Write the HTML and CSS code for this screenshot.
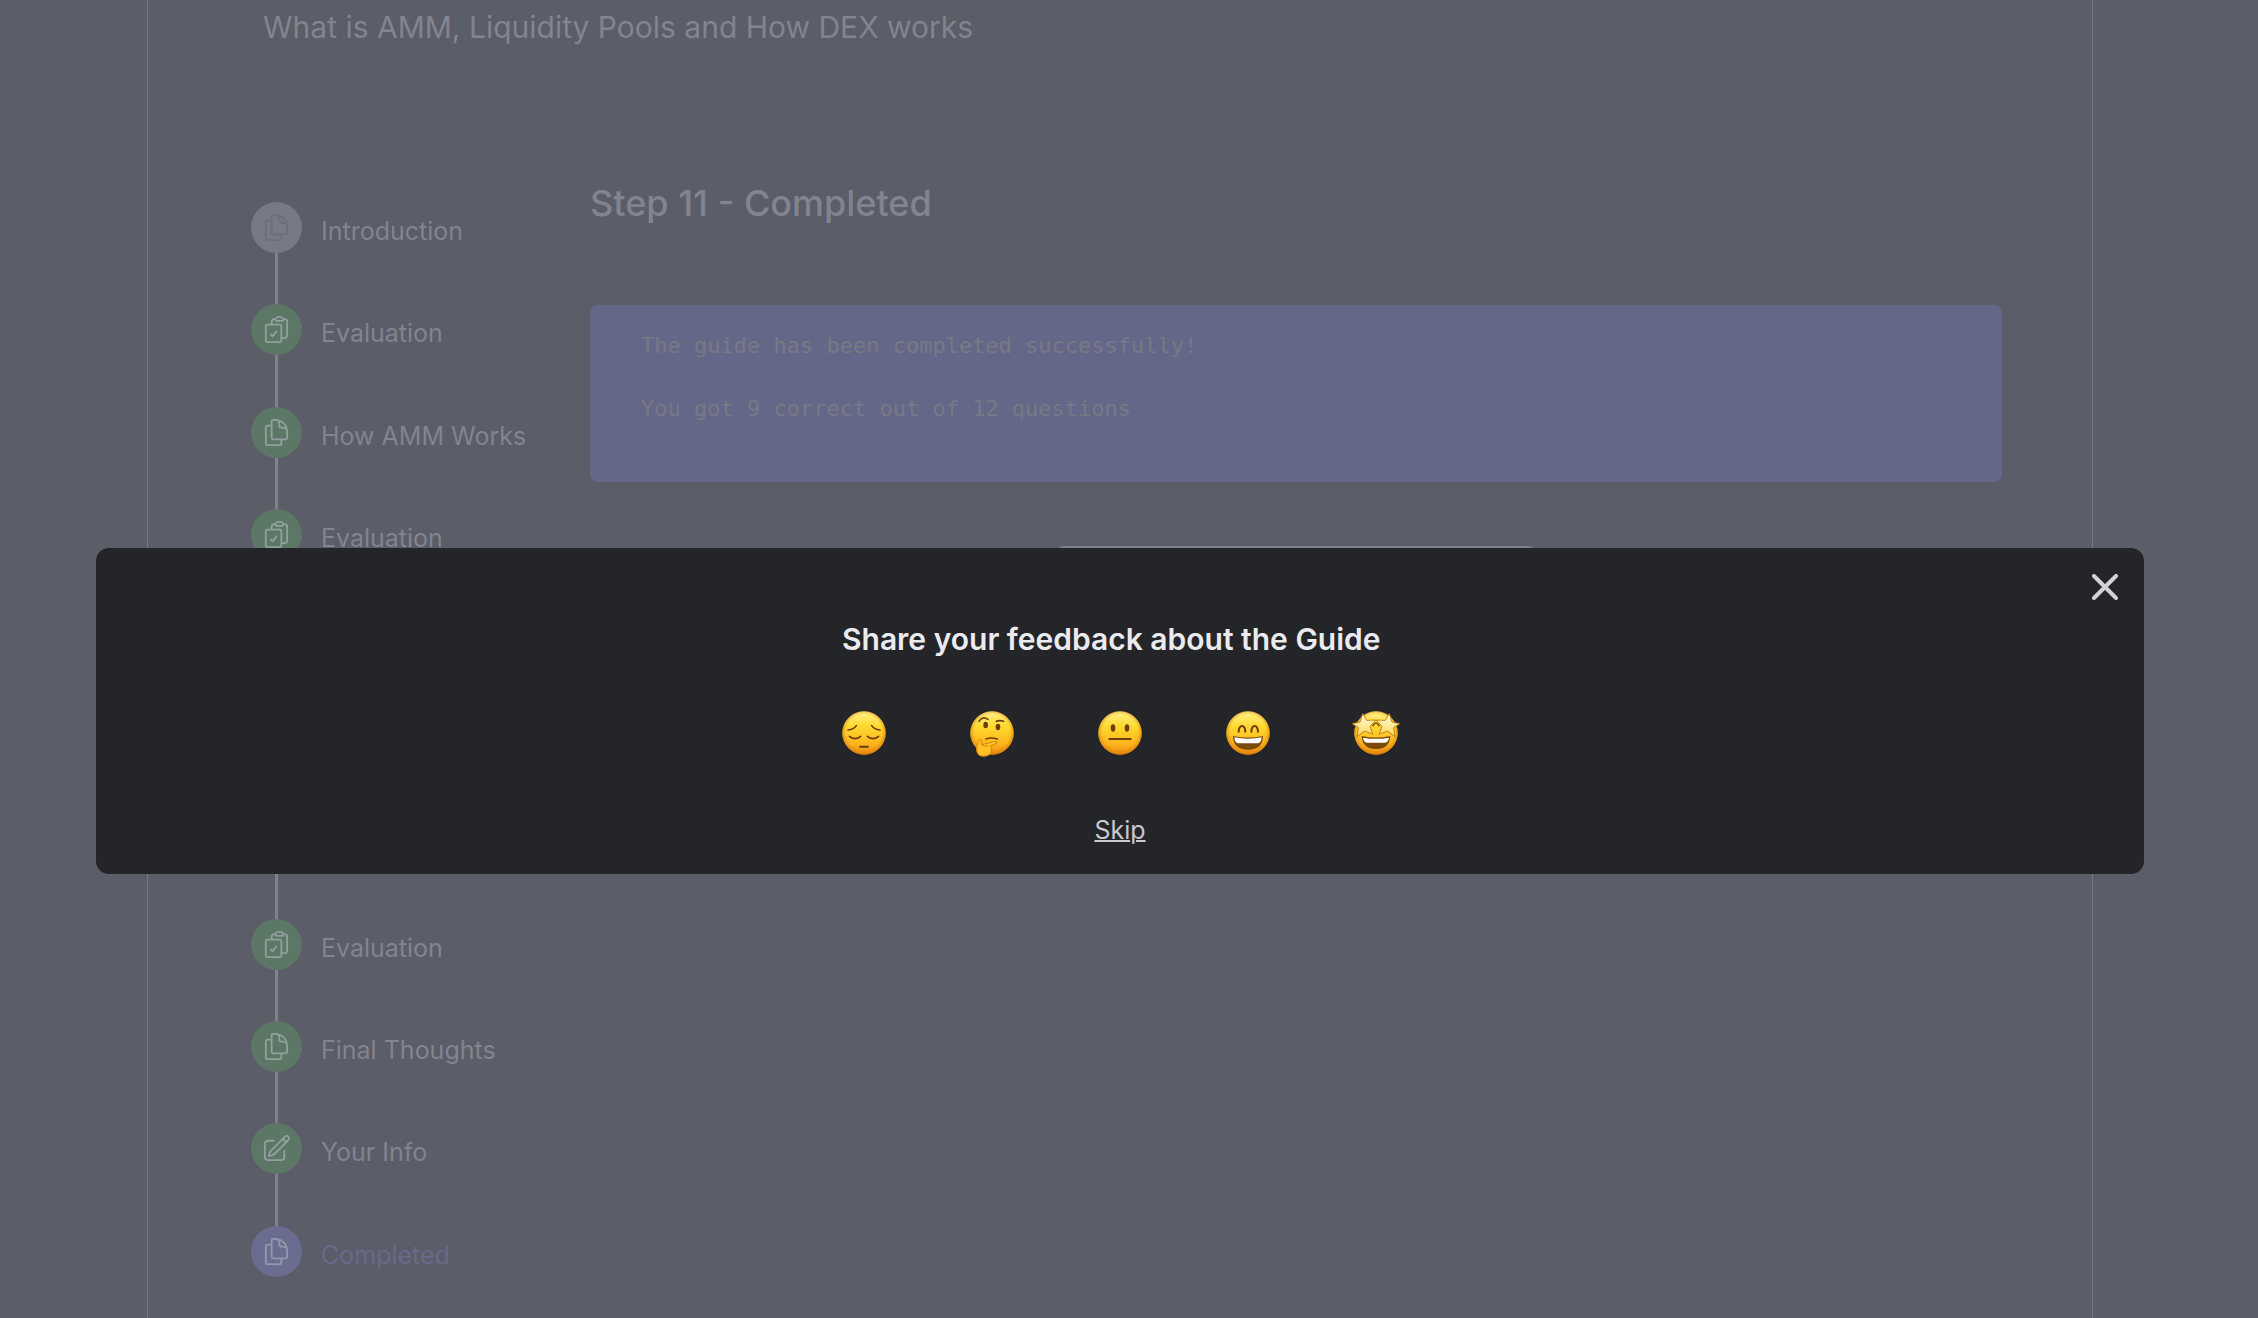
FILE: index.html
```html
<!DOCTYPE html>
<html lang="en">
<head>
<meta charset="utf-8">
<meta name="viewport" content="width=device-width, initial-scale=1">
<title>What is AMM, Liquidity Pools and How DEX works</title>
<link rel="stylesheet" href="styles.css">
</head>
<body>
<svg class="sprite" aria-hidden="true">
  <symbol id="doc" viewBox="0 0 24 24"><path d="M15.75 17.25v3.375c0 .621-.504 1.125-1.125 1.125h-9.75a1.125 1.125 0 01-1.125-1.125V7.875c0-.621.504-1.125 1.125-1.125H6.75a9.06 9.06 0 011.5.124m7.5 10.376h3.375c.621 0 1.125-.504 1.125-1.125V11.25c0-4.46-3.243-8.161-7.5-8.876a9.06 9.06 0 00-1.5-.124H9.375c-.621 0-1.125.504-1.125 1.125v3.5m7.5 10.375H9.375a1.125 1.125 0 01-1.125-1.125v-9.25m12 6.625v-1.875a3.375 3.375 0 00-3.375-3.375h-1.5a1.125 1.125 0 01-1.125-1.125v-1.5a3.375 3.375 0 00-3.375-3.375H9.75"/></symbol>
  <symbol id="check" viewBox="0 0 24 24"><path d="M11.35 3.836c-.065.21-.1.433-.1.664 0 .414.336.75.75.75h4.5a.75.75 0 00.75-.75 2.25 2.25 0 00-.1-.664m-5.8 0A2.251 2.251 0 0113.5 2.25H15c1.012 0 1.867.668 2.15 1.586m-5.8 0c-.376.023-.75.05-1.124.08C9.095 4.01 8.25 4.973 8.25 6.108V8.25m8.9-4.414c.376.023.75.05 1.124.08 1.131.094 1.976 1.057 1.976 2.192V16.5A2.25 2.25 0 0118 18.75h-2.25m-7.5-10.5H4.875c-.621 0-1.125.504-1.125 1.125v11.25c0 .621.504 1.125 1.125 1.125h9.75c.621 0 1.125-.504 1.125-1.125V18.75m-7.5-10.5h6.375c.621 0 1.125.504 1.125 1.125v9.375m-8.25-3l1.5 1.5 3-3.75"/></symbol>
  <symbol id="pencil" viewBox="0 0 24 24"><path d="M16.862 4.487l1.687-1.688a1.875 1.875 0 112.652 2.652L10.582 16.07a4.5 4.5 0 01-1.897 1.13L6 18l.8-2.685a4.5 4.5 0 011.13-1.897l8.932-8.931zm0 0L19.5 7.125M18 14v4.75A2.25 2.25 0 0115.75 21H5.25A2.25 2.25 0 013 18.75V8.25A2.25 2.25 0 015.25 6H10"/></symbol>
  <defs>
    <linearGradient id="face" x1="0" y1="0" x2="0" y2="1">
      <stop offset="0" stop-color="#fff08a"/><stop offset=".35" stop-color="#ffd92e"/><stop offset=".75" stop-color="#fdb51e"/><stop offset="1" stop-color="#e88a12"/>
    </linearGradient>
    <radialGradient id="rim" cx=".5" cy=".48" r=".52">
      <stop offset=".78" stop-color="#e58a10" stop-opacity="0"/><stop offset="1" stop-color="#d97c0c" stop-opacity=".75"/>
    </radialGradient>
    <linearGradient id="star" x1="0" y1="0" x2="0" y2="1">
      <stop offset="0" stop-color="#fffbe0"/><stop offset="1" stop-color="#ffd95a"/>
    </linearGradient>
    <g id="head"><circle cx="66" cy="66" r="65" fill="url(#face)"/><circle cx="66" cy="66" r="65" fill="url(#rim)"/></g>
  </defs>
</svg>

<main class="frame">
  <h1 class="guide-title">What is AMM, Liquidity Pools and How DEX works</h1>
  <div class="guide">
    <nav aria-label="Guide steps">
      <ol class="steps">
        <li class="step step-viewed"><span class="dot"><svg><use href="#doc"/></svg></span><a href="#step-1">Introduction</a></li>
        <li class="step"><span class="dot"><svg><use href="#check"/></svg></span><a href="#step-2">Evaluation</a></li>
        <li class="step"><span class="dot"><svg><use href="#doc"/></svg></span><a href="#step-3">How AMM Works</a></li>
        <li class="step"><span class="dot"><svg><use href="#check"/></svg></span><a href="#step-4">Evaluation</a></li>
        <li class="step"><span class="dot"><svg><use href="#doc"/></svg></span></li>
        <li class="step"><span class="dot"><svg><use href="#check"/></svg></span></li>
        <li class="step"><span class="dot"><svg><use href="#doc"/></svg></span></li>
        <li class="step"><span class="dot"><svg><use href="#check"/></svg></span><a href="#step-8">Evaluation</a></li>
        <li class="step"><span class="dot"><svg><use href="#doc"/></svg></span><a href="#step-9">Final Thoughts</a></li>
        <li class="step"><span class="dot"><svg><use href="#pencil"/></svg></span><a href="#step-10">Your Info</a></li>
        <li class="step step-current"><span class="dot"><svg><use href="#doc"/></svg></span><a href="#step-11" aria-current="step">Completed</a></li>
      </ol>
    </nav>
    <section class="content">
      <h2 class="step-title">Step 11 - Completed</h2>
      <div class="result">
        <p>The guide has been completed successfully!</p>
        <p>You got 9 correct out of 12 questions</p>
      </div>
      <button class="action" type="button" aria-label="Continue"></button>
    </section>
  </div>
</main>

<div class="overlay">
  <div class="modal" role="dialog" aria-modal="true" aria-labelledby="feedback-title">
    <button class="close" type="button" aria-label="Close">
      <svg viewBox="0 0 26 26"><path d="M2 2l22 22M24 2L2 24"/></svg>
    </button>
    <div class="feedback">
      <h2 class="feedback-title" id="feedback-title">Share your feedback about the Guide</h2>
      <div class="ratings">
        <button type="button" aria-label="Disappointed">
          <svg viewBox="0 0 132 132"><use href="#head"/><g fill="none" stroke="#6b3f08" stroke-width="5" stroke-linecap="round"><path d="M18 57q18-2 25-13M114 57q-18-2-25-13M22 76q17 14 34 0M76 76q17 14 34 0"/><path d="M54 107h24" stroke-width="6"/></g></svg>
        </button>
        <button type="button" aria-label="Unsure">
          <svg viewBox="0 0 132 132"><use href="#head"/><g fill="#6b3f08"><ellipse cx="47" cy="42" rx="7" ry="10"/><ellipse cx="84" cy="48" rx="7" ry="10"/></g><g fill="none" stroke="#6b3f08" stroke-width="5" stroke-linecap="round"><path d="M27 31q10-17 27-6M79 31q10-4 22 0M48 84q14-6 34 0"/></g><path d="M30 134q-12-7-10-25l5-20q4-7 9-1l1 13 36-9q12-2 10 4l-20 9q8 8 2 20-10 15-33 9z" fill="#ffc126" stroke="#d9820f" stroke-width="3"/><path d="M36 101q6 8 18 3" fill="none" stroke="#d9820f" stroke-width="3"/></svg>
        </button>
        <button type="button" aria-label="Neutral">
          <svg viewBox="0 0 132 132"><use href="#head"/><g fill="#6b3f08"><ellipse cx="45" cy="51" rx="7" ry="11"/><ellipse cx="87" cy="51" rx="7" ry="11"/></g><path d="M34 84h64" stroke="#6b3f08" stroke-width="6" stroke-linecap="round"/></svg>
        </button>
        <button type="button" aria-label="Happy">
          <svg viewBox="0 0 132 132"><use href="#head"/><path d="M38 62q1-17 10-17t10 17M76 62q1-17 10-17t10 17" fill="none" stroke="#6b3f08" stroke-width="6" stroke-linecap="round"/><path d="M21 75q45 9 90 0 0 41-45 41T21 75z" fill="#7a4a0a"/><path d="M25 79q41 8 82 0-1 18-13 18H38q-12 0-13-18z" fill="#fff"/></svg>
        </button>
        <button type="button" aria-label="Amazed">
          <svg viewBox="0 0 132 132"><use href="#head"/><path d="M23 75q43 9 86 0-2 39-43 39T23 75z" fill="#7a4a0a"/><path d="M27 80q39 7 78 0-2 15-14 15H41q-12 0-14-15z" fill="#fff"/><path d="M56 46q10-20 20 0" fill="none" stroke="#8a520a" stroke-width="5"/><path d="M26 8l12 20 27-1-17 20 9 23-26-10-22 17 4-27L-5 38l23-5zM106 8L94 28l-27-1 17 20-9 23 26-10 22 17-4-27 18-12-23-5z" fill="url(#star)" stroke="#c98212" stroke-width="3" stroke-linejoin="round"/></svg>
        </button>
      </div>
    </div>
    <button class="skip" type="button">Skip</button>
  </div>
</div>
</body>
</html>
```

FILE: styles.css
```css
* {
  box-sizing: border-box;
}

body {
  margin: 0;
  min-height: 100vh;
  display: flex;
  background: #5b5d69;
  color: #82848f;
  font-family: Inter, "Liberation Sans", sans-serif;
  overflow: hidden;
}

h1, h2, p, ol {
  margin: 0;
  padding: 0;
}

button {
  padding: 0;
  border: 0;
  background: none;
  font: inherit;
  color: inherit;
  cursor: pointer;
}

.sprite {
  position: absolute;
  width: 0;
  height: 0;
}

/* Guide page */
.frame {
  flex: 1;
  margin: 0 165px 0 147px;
  padding: 7px 90px 0 103px;
  border: 1px solid #777985;
  border-width: 0 1px;
}

.guide-title {
  margin: 0 0 132px 12px;
  font-size: 30px;
  line-height: 40px;
  font-weight: 400;
}

.guide {
  display: grid;
  grid-template-columns: 339px 1fr;
}

.steps {
  display: grid;
  grid-auto-rows: 1fr;
  height: 1126px;
  margin-top: 23px;
  list-style: none;
  font-size: 25px;
  line-height: 32px;
}

.step {
  display: grid;
  grid-template-columns: 51px 1fr;
  grid-template-rows: 51px 1fr;
  column-gap: 19px;
}

.step a {
  padding-top: 13px;
  color: inherit;
  text-decoration: none;
}

.step:not(:last-child)::after {
  content: "";
  grid-area: 2 / 1;
  justify-self: center;
  width: 3px;
  background: #7f818d;
}

.dot {
  display: grid;
  place-items: center;
  border-radius: 50%;
  background: #5d7767;
  color: #92a09d;
}

.dot svg {
  width: 31px;
  height: 31px;
  fill: none;
  stroke: currentColor;
  stroke-width: 1.4;
  stroke-linecap: round;
  stroke-linejoin: round;
}

.step-viewed .dot {
  background: #777985;
  color: #6c6e7a;
}

.step-current {
  color: #676a89;
}

.step-current .dot {
  background: #6b6d90;
  color: #9597ab;
}

.content {
  display: flex;
  flex-direction: column;
}

.step-title {
  margin-bottom: 78px;
  font-size: 36px;
  line-height: 48px;
  font-weight: 500;
}

.result {
  display: flex;
  flex-direction: column;
  gap: 32px;
  padding: 25px 51px 58px;
  border-radius: 8px;
  background: #656789;
  color: #777985;
  font-family: "DejaVu Sans Mono", monospace;
  font-size: 22px;
  line-height: 31px;
}

.action {
  align-self: center;
  width: 34%;
  height: 64px;
  margin-top: 64px;
  border-radius: 8px;
  background: #7d7f91;
}

/* Feedback dialog */
.overlay {
  position: fixed;
  inset: 0 18px 0 0;
  padding: 548px 96px 0;
}

.modal {
  position: relative;
  display: flex;
  flex-direction: column;
  align-items: center;
  padding: 71px 0 28px;
  border-radius: 13px;
  background: #242529;
}

.close {
  position: absolute;
  top: 26px;
  right: 26px;
  width: 26px;
  height: 26px;
}

.close svg {
  display: block;
  fill: none;
  stroke: #d2d2d7;
  stroke-width: 4;
  stroke-linecap: round;
}

.feedback-title {
  margin-bottom: 52px;
  color: #ebebef;
  font-size: 30px;
  line-height: 40px;
  font-weight: 600;
}

.ratings {
  display: flex;
  gap: 84px;
}

.ratings button {
  width: 44px;
  height: 44px;
}

.ratings svg {
  display: block;
  overflow: visible;
}

.skip {
  margin-top: 59px;
  color: #c8c8cd;
  font-size: 25px;
  line-height: 32px;
  text-decoration: underline;
  text-decoration-thickness: 2px;
}
```
